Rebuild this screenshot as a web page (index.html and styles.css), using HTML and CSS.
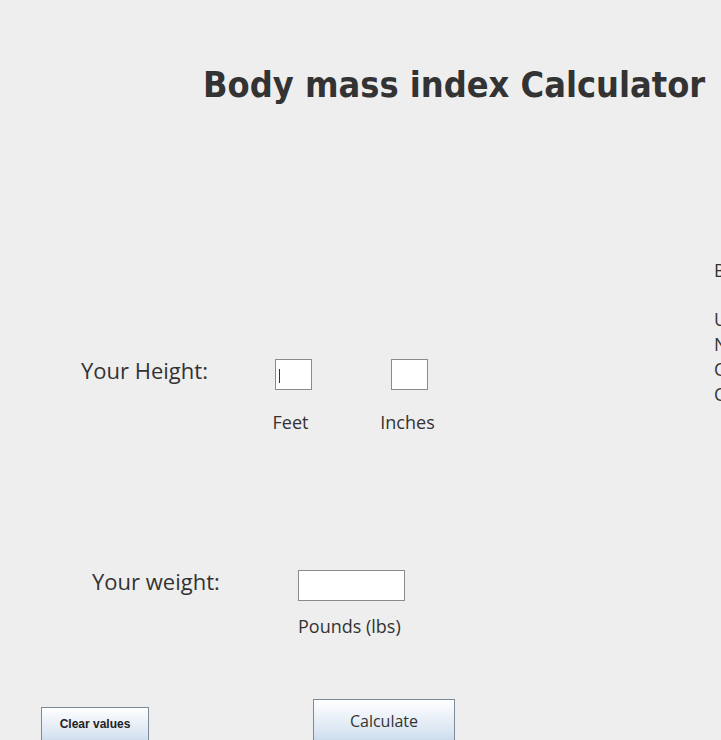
FILE: index.html
```html
<!DOCTYPE html>
<html>
<head>
<meta charset="utf-8">
<link rel="stylesheet" href="styles.css">
</head>
<body>
<div class="app">
  <h1 class="title">Body mass index Calculator</h1>
  <div class="main">
    <div class="form">
      <div class="height-row">
        <div class="label">Your Height:</div>
        <div class="field feet">
          <div class="box small"><span class="caret"></span></div>
          <div class="unit">Feet</div>
        </div>
        <div class="field inches">
          <div class="box small"></div>
          <div class="unit">Inches</div>
        </div>
      </div>
      <div class="weight-row">
        <div class="label">Your weight:</div>
        <div class="field pounds">
          <div class="box wide"></div>
          <div class="unit">Pounds (lbs)</div>
        </div>
      </div>
      <div class="buttons">
        <button class="btn clear">Clear values</button>
        <button class="btn calc">Calculate</button>
      </div>
    </div>
    <div class="side">
      <div>BMI Categories:</div>
      <div class="gap"></div>
      <div>Underweight = &lt;18.5</div>
      <div>Normal weight = 18.5–24.9</div>
      <div>Overweight = 25–29.9</div>
      <div>Obesity = BMI of 30 or greater</div>
    </div>
  </div>
</div>
</body>
</html>
```
FILE: styles.css
```css
html, body {
  margin: 0;
  padding: 0;
  background: #eeeeee;
  overflow: hidden;
}
.app {
  width: 721px;
  height: 740px;
  overflow: hidden;
  color: #333333;
  font-family: "Open Sans", "DejaVu Sans", sans-serif;
}
.title {
  margin: 0;
  padding: 64px 0 0 203px;
  font-family: "DejaVu Sans Condensed", "DejaVu Sans", sans-serif;
  font-stretch: condensed;
  font-weight: bold;
  font-size: 35.8px;
  line-height: 42px;
  white-space: nowrap;
  color: #333333;
}
.main {
  display: grid;
  grid-template-columns: 714px 300px;
  align-items: start;
}
.side {
  padding-top: 152px;
  font-size: 18px;
  line-height: 25px;
  white-space: nowrap;
}
.side .gap { height: 24px; }
.form {
  padding-top: 253px;
}
.height-row {
  display: flex;
  align-items: flex-start;
  padding-left: 81px;
}
.label {
  font-size: 22px;
  line-height: 26px;
  white-space: nowrap;
}
.height-row .label { width: 194px; margin-top: -2px; }
.field {
  display: flex;
  flex-direction: column;
  align-items: center;
}
.unit {
  font-size: 18px;
  line-height: 24px;
  margin-top: 20px;
  white-space: nowrap;
}
.feet { width: 37px; }
.feet .unit { margin-left: -6px; }
.inches { width: 37px; margin-left: 79px; }
.inches .unit { margin-left: -4px; }
.box {
  background: #ffffff;
  border: 1px solid #8a8a8a;
  box-sizing: border-box;
  height: 31px;
  position: relative;
}
.box.small { width: 37px; }
.box.wide { width: 107px; }
.caret {
  position: absolute;
  left: 3px;
  top: 9px;
  width: 1px;
  height: 14px;
  background: #333;
}
.weight-row {
  display: flex;
  align-items: flex-start;
  padding-left: 92px;
  margin-top: 136px;
}
.weight-row .label { width: 206px; margin-top: -2px; }
.pounds { align-items: flex-start; }
.pounds .unit { margin-top: 13px; }
.buttons {
  display: flex;
  align-items: flex-start;
  padding-left: 41px;
  margin-top: 61px;
}
.btn {
  box-sizing: border-box;
  border: 1px solid #7a8a99;
  background: linear-gradient(#ffffff, #d9e5f2 70%, #c3d5e8);
  color: #333333;
  padding: 0;
  margin: 0;
}
.clear {
  width: 108px;
  height: 40px;
  margin-top: 8px;
  font-family: "Liberation Sans", Arial, sans-serif;
  font-weight: bold;
  font-size: 12px;
  padding-bottom: 6px;
  color: #222;
}
.calc {
  width: 142px;
  height: 48px;
  margin-left: 164px;
  font-family: "Open Sans", sans-serif;
  font-size: 16px;
  padding-bottom: 4px;
}
```
